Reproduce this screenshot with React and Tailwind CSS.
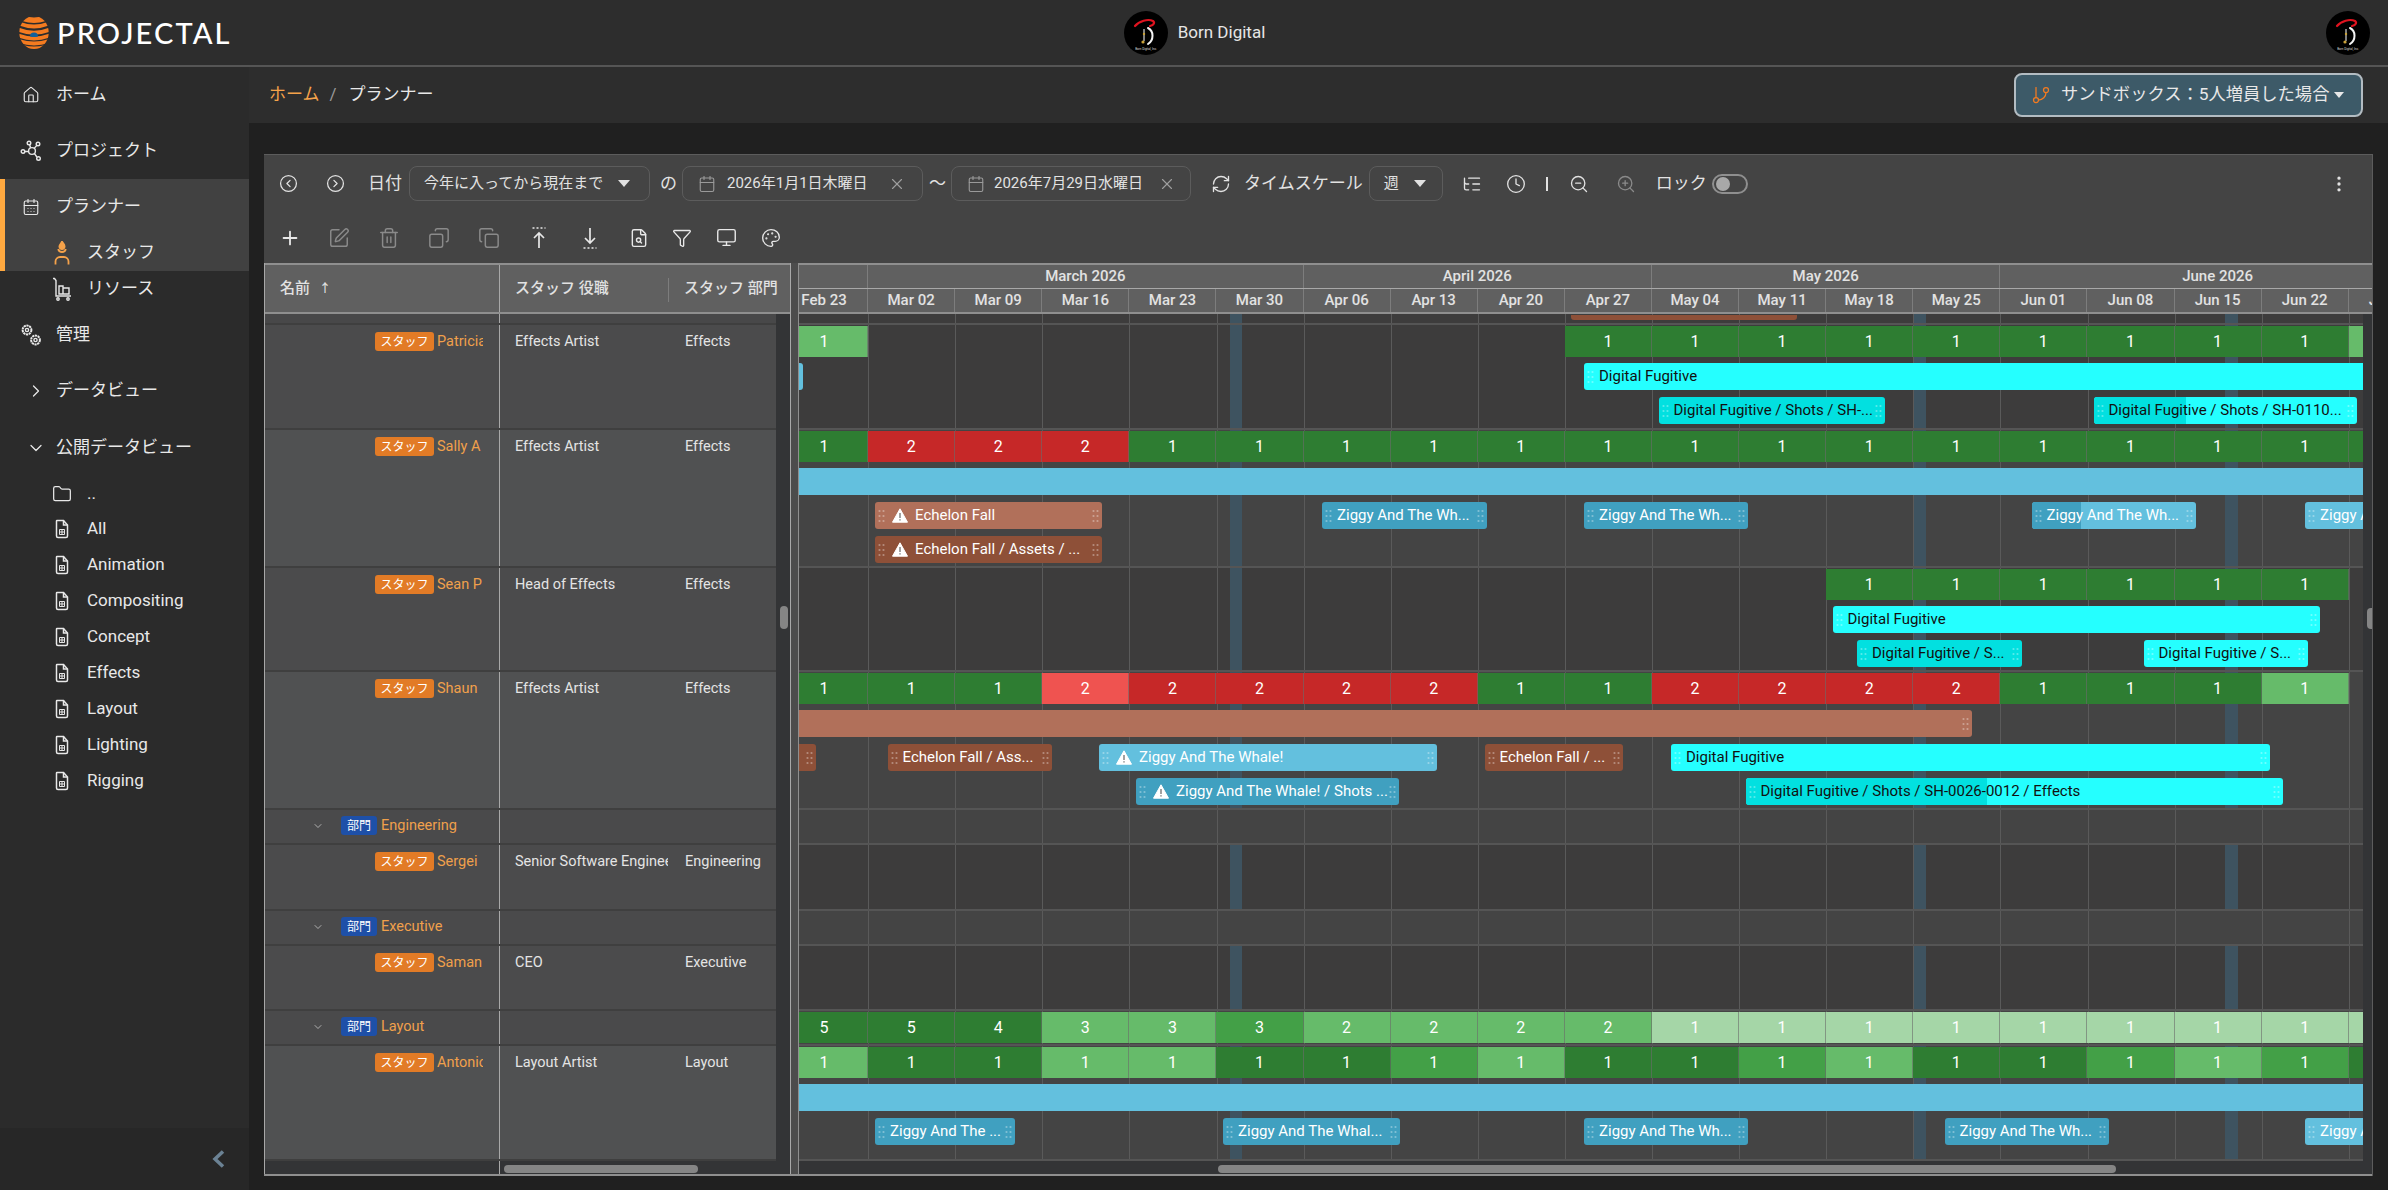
import React from 'react';
import {
  House, CalendarDays, Folder, ChevronRight, ChevronDown, CircleChevronLeft, CircleChevronRight,
  Calendar, X, RefreshCw, Plus, SquarePen, Trash2, Copy, FileSearch, Funnel, Monitor, Palette, ZoomIn, ZoomOut,
  Clock, GitBranch, EllipsisVertical, ListTree,
} from 'lucide-react';

const WEEK = 87.1;
const ORIGIN = 781;
const weeks = ['Feb 23', 'Mar 02', 'Mar 09', 'Mar 16', 'Mar 23', 'Mar 30', 'Apr 06', 'Apr 13', 'Apr 20', 'Apr 27', 'May 04', 'May 11', 'May 18', 'May 25', 'Jun 01', 'Jun 08', 'Jun 15', 'Jun 22', 'Jun 29'];
const months = [
  { label: '', span: 1 },
  { label: 'March 2026', span: 5 },
  { label: 'April 2026', span: 4 },
  { label: 'May 2026', span: 4 },
  { label: 'June 2026', span: 5 },
];
const stripes = [1229.6, 1913, 2225];

const tones = {
  cyan: 'bg-[#25ffff] text-[#111]',
  teal: 'bg-[#02e0e0] text-[#111]',
  sky: 'bg-[#63c0de] text-white',
  blue: 'bg-[#40a0c0] text-white',
  clay: 'bg-[#b1705a] text-white',
  rust: 'bg-[#8e5038] text-white',
};
const progressTones = { teal: 'bg-[#02e0e0]', blue: 'bg-[#40a0c0]' };

const loadTones = {
  d: 'bg-[#2e7d32]',
  m: 'bg-[#43a047]',
  l: 'bg-[#66bb6a]',
  p: 'bg-[#a5d6a7]',
  r: 'bg-[#c62828]',
  o: 'bg-[#ef5350]',
};

const cells = (str, vals) => str.split('').map((t, i) => (t === '.' ? null : { t, v: vals ? vals[i] : t === 'r' || t === 'o' ? 2 : 1 }));

const rows = [
  { h: 11, dark: true, stub: true, lanes: [] },
  {
    h: 105, dark: true, tag: 'スタッフ', name: 'Patricia', role: 'Effects Artist', dept: 'Effects',
    load: cells('l........dddddddddl'),
    lanes: [
      [
        { a: 781, b: 802.5, tone: 'sky' },
        { a: 1584, b: 2400, tone: 'cyan', label: 'Digital Fugitive', hl: true },
      ],
      [
        { a: 1658.5, b: 1884.5, tone: 'teal', label: 'Digital Fugitive / Shots / SH-...', hl: true, hr: true },
        { a: 2093.5, b: 2357, tone: 'cyan', label: 'Digital Fugitive / Shots / SH-0110...', hl: true, hr: true, progress: 92.5, under: 'teal' },
      ],
    ],
  },
  {
    h: 138, tag: 'スタッフ', name: 'Sally A', role: 'Effects Artist', dept: 'Effects',
    load: cells('drrrddddddddddddddd'),
    lanes: [
      [{ a: 781, b: 2400, tone: 'sky' }],
      [
        { a: 875, b: 1101.5, tone: 'clay', label: 'Echelon Fall', warn: true, hl: true, hr: true },
        { a: 1322, b: 1486.5, tone: 'blue', label: 'Ziggy And The Wh...', hl: true, hr: true },
        { a: 1584, b: 1748, tone: 'blue', label: 'Ziggy And The Wh...', hl: true, hr: true },
        { a: 2031.5, b: 2195.5, tone: 'sky', label: 'Ziggy And The Wh...', hl: true, hr: true, progress: 49.5, under: 'blue' },
        { a: 2305, b: 2420, tone: 'sky', label: 'Ziggy And The Whale!', hl: true },
      ],
      [{ a: 875, b: 1101.5, tone: 'rust', label: 'Echelon Fall / Assets / ...', warn: true, hl: true, hr: true }],
    ],
  },
  {
    h: 104, dark: true, tag: 'スタッフ', name: 'Sean P', role: 'Head of Effects', dept: 'Effects',
    load: cells('............dddddd.'),
    lanes: [
      [{ a: 1832.5, b: 2320, tone: 'cyan', label: 'Digital Fugitive', hl: true, hr: true }],
      [
        { a: 1857, b: 2022, tone: 'teal', label: 'Digital Fugitive / S...', hl: true, hr: true },
        { a: 2143.5, b: 2308, tone: 'cyan', label: 'Digital Fugitive / S...', hl: true, hr: true },
      ],
    ],
  },
  {
    h: 138, tag: 'スタッフ', name: 'Shaun', role: 'Effects Artist', dept: 'Effects',
    load: cells('dddorrrrddrrrrdddl.'),
    lanes: [
      [{ a: 781, b: 1972, tone: 'clay', hr: true }],
      [
        { a: 781, b: 815.5, tone: 'rust', hr: true },
        { a: 887.5, b: 1051.5, tone: 'rust', label: 'Echelon Fall / Ass...', hl: true, hr: true },
        { a: 1099, b: 1437, tone: 'sky', label: 'Ziggy And The Whale!', warn: true, hl: true, hr: true },
        { a: 1484.5, b: 1623, tone: 'rust', label: 'Echelon Fall / ...', hl: true, hr: true },
        { a: 1671, b: 2270, tone: 'cyan', label: 'Digital Fugitive', hl: true, hr: true },
      ],
      [
        { a: 1136, b: 1399, tone: 'blue', label: 'Ziggy And The Whale! / Shots ...', warn: true, hl: true, hr: true },
        { a: 1745.5, b: 2282.5, tone: 'cyan', label: 'Digital Fugitive / Shots / SH-0026-0012 / Effects', hl: true, hr: true, progress: 241.5, under: 'teal' },
      ],
    ],
  },
  { h: 35, group: true, tag: '部門', name: 'Engineering', lanes: [] },
  { h: 66, dark: true, tag: 'スタッフ', name: 'Sergei', role: 'Senior Software Engineer', dept: 'Engineering', lanes: [] },
  { h: 35, group: true, tag: '部門', name: 'Executive', lanes: [] },
  { h: 65, dark: true, tag: 'スタッフ', name: 'Saman', role: 'CEO', dept: 'Executive', lanes: [] },
  {
    h: 35, group: true, tag: '部門', name: 'Layout', lanes: [],
    load: cells('dddllmllllppppppppp', [5, 5, 4, 3, 3, 3, 2, 2, 2, 2, 1, 1, 1, 1, 1, 1, 1, 1, 1]),
  },
  {
    h: 115, tag: 'スタッフ', name: 'Antonio', role: 'Layout Artist', dept: 'Layout',
    load: cells('lddllddmlddmlddmlmd'),
    lanes: [
      [{ a: 781, b: 2400, tone: 'sky' }],
      [
        { a: 875, b: 1014.5, tone: 'blue', label: 'Ziggy And The ...', hl: true, hr: true },
        { a: 1223, b: 1399.5, tone: 'blue', label: 'Ziggy And The Whal...', hl: true, hr: true },
        { a: 1584, b: 1748, tone: 'blue', label: 'Ziggy And The Wh...', hl: true, hr: true },
        { a: 1944.5, b: 2109, tone: 'blue', label: 'Ziggy And The Wh...', hl: true, hr: true },
        { a: 2305, b: 2420, tone: 'sky', label: 'Ziggy And The Whale!', hl: true },
      ],
    ],
  },
];

const FileGrid = ({ className }) => (
  <svg viewBox="0 0 16 20" fill="none" stroke="currentColor" strokeWidth="1.5" className={className}>
    <path d="M3 1.500h6.500L13.500 6v11a1.500 1.500 0 0 1-1.500 1.500H4A1.500 1.500 0 0 1 2.500 17V2a.5.5 0 0 1 .5-.5z" />
    <path d="M9.500 1.500V6h4" />
    <path d="M5.500 10.500h5v5h-5zM8 10.500v5M5.500 13h5" strokeWidth="1" />
  </svg>
);

const ProjectIcon = ({ className }) => (
  <svg viewBox="0 0 22 22" fill="none" stroke="currentColor" strokeWidth="1.400" className={className}>
    <circle cx="12" cy="11" r="3.400" />
    <circle cx="3" cy="11.500" r="1.800" />
    <circle cx="9" cy="3" r="1.800" />
    <circle cx="18" cy="4" r="1.800" />
    <circle cx="18.500" cy="18.500" r="1.800" />
    <path d="M4.800 11.500h3.800M9.600 4.800l1 3M16.800 5.400l-2.600 3M16.900 17l-2.600-3.600" />
  </svg>
);

const GearsIcon = ({ className }) => (
  <svg viewBox="0 0 22 24" fill="none" stroke="currentColor" strokeWidth="1.400" className={className}>
    <circle cx="7" cy="7" r="4.400" strokeDasharray="2.200 0.600" strokeWidth="2" />
    <circle cx="7" cy="7" r="1.600" />
    <circle cx="15.500" cy="17" r="4.400" strokeDasharray="2.200 0.600" strokeWidth="2" />
    <circle cx="15.500" cy="17" r="1.600" />
  </svg>
);

const StaffIcon = ({ className }) => (
  <svg viewBox="0 0 18 24" fill="none" stroke="currentColor" strokeWidth="1.800" className={className}>
    <path d="M9 .5c.4 1.600 2.600 2.400 2.600 5A2.600 2.600 0 0 1 9 8.200a2.600 2.600 0 0 1-2.600-2.700C6.400 3.600 8.400 2.400 9 .5z" fill="currentColor" />
    <path d="M5.200 8a3.900 3.900 0 0 0 7.600 0" />
    <path d="M2.500 23.500v-3a4.500 4.500 0 0 1 4.500-4.500h4a4.500 4.500 0 0 1 4.500 4.500v3" />
  </svg>
);

const ResourceIcon = ({ className }) => (
  <svg viewBox="0 0 20 24" fill="none" stroke="currentColor" strokeWidth="1.400" className={className}>
    <path d="M1 1.500h1.500l1.500 2V19h15" />
    <path d="M7 9h4v8H7zM11 11h6v6h-6z" />
    <circle cx="6" cy="22" r="1.200" />
    <circle cx="16" cy="22" r="1.200" />
  </svg>
);

const UploadDots = ({ className, flip }) => (
  <svg viewBox="0 0 20 24" fill="none" stroke="currentColor" strokeWidth="1.700" className={className}>
    {flip ? (
      <>
        <path d="M10 2v15M5 12l5 5 5-5" />
        <path d="M3.500 22h13" strokeDasharray="2 2" />
      </>
    ) : (
      <>
        <path d="M3.500 2h13" strokeDasharray="2 2" />
        <path d="M10 22V7M5 12l5-5 5 5" />
      </>
    )}
  </svg>
);

const Logo = () => (
  <svg viewBox="0 0 30 33" className="w-[30px] h-[33px] shrink-0">
    <defs>
      <clipPath id="ball">
        <ellipse cx="15" cy="16.500" rx="14.700" ry="16.500" />
      </clipPath>
    </defs>
    <g clipPath="url(#ball)" fill="none" stroke="#f47b20" strokeWidth="3.800">
      <path d="M4 2.500Q15 6 26 2.500" strokeWidth="5.500" />
      <path d="M0 7.500Q15 13.500 30 7.500" />
      <path d="M-1 13.500Q15 20 31 13.500" />
      <path d="M-1 19.500Q15 25.500 31 19.500" />
      <path d="M0 25Q15 30 30 25" />
      <path d="M4 31Q15 33.500 26 31" strokeWidth="3.600" />
    </g>
    <path d="M11 20.500a4 4 0 0 1 8 0q-4 1-8 0z" fill="#12609c" />
  </svg>
);

const BornLogo = () => (
  <svg viewBox="0 0 44 44" className="w-[44px] h-[44px] shrink-0">
    <circle cx="22" cy="22" r="22" fill="#000" />
    <path d="M11 15C15 10 24 7.500 29 10c2 1.500 1 4-3 5" fill="none" stroke="#e0131f" strokeWidth="2.200" strokeLinecap="round" />
    <path d="M24 17c6 3 6 12 0 16" fill="none" stroke="#f4f4f4" strokeWidth="2" strokeLinecap="round" />
    <path d="M20 18v12" stroke="#d8d8d8" strokeWidth="1.200" />
    <circle cx="19" cy="31" r="1.600" fill="#c9a23a" />
    <circle cx="20" cy="23" r="1.200" fill="#c9a23a" />
    <text x="22" y="38.500" textAnchor="middle" fontSize="3" fill="#ddd" fontFamily="Roboto, sans-serif">Born Digital, Inc.</text>
  </svg>
);

const Warn = () => (
  <svg viewBox="0 0 16 15" className="w-[16px] h-[15px] shrink-0">
    <path d="M8 .8 15.500 14.200H.5z" fill="#fff" stroke="#fff" strokeLinejoin="round" />
    <path d="M8 5v5M8 11.300v1.300" stroke="#8a8a8a" strokeWidth="1.600" />
  </svg>
);

const Handle = ({ side }) => (
  <svg viewBox="0 0 7 14" className={`absolute top-[7px] w-[7px] h-[14px] text-white/35 ${side === 'l' ? 'left-[3px]' : 'right-[3px]'}`}>
    {[1.500, 5.500].map((x) => [2, 7, 12].map((y) => <circle key={`${x}${y}`} cx={x} cy={y} r="1.100" fill="currentColor" />))}
  </svg>
);

const Bar = ({ bar }) => (
  <div
    className={`absolute top-0 h-[27px] rounded-[3px] overflow-hidden ${tones[bar.tone]}`}
    style={{ left: bar.a - ORIGIN, width: bar.b - bar.a }}
  >
    {bar.progress && <div className={`absolute inset-y-0 left-0 ${progressTones[bar.under]}`} style={{ width: bar.progress }} />}
    {bar.hl && <Handle side="l" />}
    {bar.hr && <Handle side="r" />}
    {bar.label && (
      <div className={`relative h-full flex items-center whitespace-nowrap text-[15px] ${bar.warn ? 'pl-[17px] gap-[7px]' : 'pl-[15px]'}`}>
        {bar.warn && <Warn />}
        <span>{bar.label}</span>
      </div>
    )}
  </div>
);

const GanttRow = ({ row }) => (
  <div className={`relative border-b-2 border-[#555] ${row.dark ? 'bg-[#3d3c3c]' : 'bg-[#444444]'}`} style={{ height: row.h }}>
    {!row.group && stripes.map((x) => (
      <div key={x} className="absolute inset-y-0 w-[12.5px] bg-[#3e5360]" style={{ left: x - ORIGIN }} />
    ))}
    {weeks.map((w, i) => (
      <div key={w} className="absolute inset-y-0 w-px bg-[#5a5a5a]" style={{ left: (i + 1) * WEEK }} />
    ))}
    {row.stub && <div className="absolute top-[1px] h-[5px] rounded-b-[3px] bg-[#8e5038]" style={{ left: 790, width: 226 }} />}
    {row.load && (
      <div className="relative flex pt-px">
        {row.load.map((c, i) => (
          <div key={i} className={`w-[87.1px] h-[31px] shrink-0 flex items-center justify-center text-[16px] text-white ${c ? `${loadTones[c.t]} border-r border-[#6a6a6a]/60` : ''}`}>
            {c ? c.v : ''}
          </div>
        ))}
      </div>
    )}
    {row.lanes.map((lane, i) => (
      <div key={i} className={`relative h-[27px] ${i === 0 ? 'mt-[6px]' : 'mt-[7px]'}`}>
        {lane.map((bar) => <Bar key={`${bar.a}${bar.tone}`} bar={bar} />)}
      </div>
    ))}
  </div>
);

const LeftRow = ({ row }) => {
  if (row.stub) {
    return (
      <div className="flex h-[11px] bg-[#484849] border-b-2 border-[#3f3f3f]">
        <div className="w-[235px] border-r border-[#a8a8a8]" />
      </div>
    );
  }
  const bg = row.group ? 'bg-[#4a4a4b]' : row.dark ? 'bg-[#4b4b4c]' : 'bg-[#505152]';
  return (
    <div className={`flex border-b-2 border-[#3f3f3f] ${bg}`} style={{ height: row.h }}>
      {row.group ? (
        <div className="w-[235px] border-r border-[#a8a8a8] flex items-start pt-[6px] pl-[47px]">
          <ChevronDown className="w-[12px] h-[12px] mt-[4px] text-[#cfcfcf]" strokeWidth={1.5} />
          <span className="ml-[17px] w-[36px] h-[19px] rounded-[3px] bg-[#1e50a8] text-white text-[12px] flex items-center justify-center">{row.tag}</span>
          <span className="ml-[4px] text-[14.5px] leading-[19px] text-[#f0a04b]">{row.name}</span>
        </div>
      ) : (
        <div className="w-[235px] border-r border-[#a8a8a8] flex items-start pt-[7px] pl-[110px]">
          <span className="w-[59px] h-[19px] rounded-[3px] bg-[#e27b26] text-white text-[12px] flex items-center justify-center shrink-0">{row.tag}</span>
          <span className="ml-[3px] w-[46px] overflow-hidden whitespace-nowrap text-[14.5px] leading-[19px] text-[#f0a04b]">{row.name}</span>
        </div>
      )}
      <div className="w-[168px] pl-[15px] pt-[7px] overflow-hidden whitespace-nowrap text-[14.5px] leading-[19px] text-[#e4e4e4]">{row.role}</div>
      <div className="flex-1 pl-[17px] pt-[7px] overflow-hidden whitespace-nowrap text-[14.5px] leading-[19px] text-[#e4e4e4]">{row.dept}</div>
    </div>
  );
};

const NavItem = ({ icon, label, className = 'h-[36px]', textClass = 'pl-[87px]', children }) => (
  <div className={`relative flex items-center text-[17px] text-[#e8e8e8] ${textClass} ${className}`}>
    {icon}
    {label}
    {children}
  </div>
);

const viewNames = ['All', 'Animation', 'Compositing', 'Concept', 'Effects', 'Layout', 'Lighting', 'Rigging'];

const Sidebar = () => (
  <aside className="w-[249px] shrink-0 flex flex-col bg-[#2b2b2b]">
    <NavItem label="ホーム" className="h-[56px]" textClass="pl-[56px]" icon={<House className="absolute left-[22px] w-[18px] h-[18px]" strokeWidth={1.5} />} />
    <NavItem label="プロジェクト" className="h-[56px]" textClass="pl-[56px]" icon={<ProjectIcon className="absolute left-[20px] w-[22px] h-[22px]" />} />
    <div className="bg-[#414141] border-l-[5px] border-[#ffa940]">
      <NavItem label="プランナー" className="h-[55px]" textClass="pl-[51px]" icon={<CalendarDays className="absolute left-[17px] w-[18px] h-[20px]" strokeWidth={1.5} />} />
      <NavItem label="スタッフ" className="h-[37px]" textClass="pl-[82px]" icon={<StaffIcon className="absolute left-[48px] w-[18px] h-[24px] text-[#f5a24a]" />} />
    </div>
    <NavItem label="リソース" className="h-[35px]" icon={<ResourceIcon className="absolute left-[52px] w-[20px] h-[24px]" />} />
    <NavItem label="管理" className="h-[57px]" textClass="pl-[56px]" icon={<GearsIcon className="absolute left-[20px] w-[22px] h-[24px]" />} />
    <NavItem label="データビュー" className="h-[56px]" textClass="pl-[56px]" icon={<ChevronRight className="absolute left-[26px] w-[20px] h-[20px]" strokeWidth={1.5} />} />
    <NavItem label="公開データビュー" className="h-[57px]" textClass="pl-[56px]" icon={<ChevronDown className="absolute left-[26px] w-[20px] h-[20px]" strokeWidth={1.5} />} />
    <NavItem label=".." className="h-[35px]" icon={<Folder className="absolute left-[52px] w-[20px] h-[20px]" strokeWidth={1.5} />} />
    {viewNames.map((n) => (
      <NavItem key={n} label={n} icon={<FileGrid className="absolute left-[54px] w-[16px] h-[20px]" />} />
    ))}
    <div className="mt-auto h-[62px] bg-[#272727] flex items-center justify-end pr-[24px]">
      <svg viewBox="0 0 13 18" fill="none" stroke="#6b8294" strokeWidth="3.500" className="w-[13px] h-[18px]">
        <path d="M11 1.500 3 9l8 7.500" />
      </svg>
    </div>
  </aside>
);

const TopToolbar = () => (
  <div className="h-[57px] flex items-center pl-[15px] text-[#e2e2e2]">
    <CircleChevronLeft className="w-[19px] h-[19px]" strokeWidth={1.6} />
    <CircleChevronRight className="w-[19px] h-[19px] ml-[28px]" strokeWidth={1.6} />
    <span className="ml-[23px] text-[17px]">日付</span>
    <div className="ml-[7px] w-[241px] h-[35px] rounded-[8px] border border-[#5c5c5c] flex items-center pl-[14px] text-[15px]">
      今年に入ってから現在まで
      <span className="ml-[15px] w-0 h-0 border-x-[6px] border-x-transparent border-t-[7px] border-t-[#e2e2e2]" />
    </div>
    <span className="ml-[10px] text-[17px]">の</span>
    <div className="ml-[5px] w-[241px] h-[35px] rounded-[8px] border border-[#5c5c5c] flex items-center pl-[15px] text-[15px]">
      <Calendar className="w-[18px] h-[20px] text-[#9a9a9a] mr-[11px]" strokeWidth={1.5} />
      <span>2026年1月1日木曜日</span>
      <X className="w-[18px] h-[18px] ml-[20px] text-[#a0a0a0]" strokeWidth={1.5} />
    </div>
    <span className="ml-[6px] w-[22px] text-[17px]">〜</span>
    <div className="w-[240px] h-[35px] rounded-[8px] border border-[#5c5c5c] flex items-center pl-[15px] text-[15px]">
      <Calendar className="w-[18px] h-[20px] text-[#9a9a9a] mr-[9px]" strokeWidth={1.5} />
      <span>2026年7月29日水曜日</span>
      <X className="w-[18px] h-[18px] ml-[15px] text-[#a0a0a0]" strokeWidth={1.5} />
    </div>
    <RefreshCw className="w-[20px] h-[20px] ml-[20px]" strokeWidth={1.6} />
    <span className="ml-[13px] text-[17px]">タイムスケール</span>
    <div className="ml-[6px] w-[74px] h-[35px] rounded-[8px] border border-[#5c5c5c] flex items-center pl-[14px] text-[15px]">
      週
      <span className="ml-[15px] w-0 h-0 border-x-[6px] border-x-transparent border-t-[7px] border-t-[#e2e2e2]" />
    </div>
    <ListTree className="w-[20px] h-[20px] ml-[19px]" strokeWidth={1.6} />
    <Clock className="w-[20px] h-[20px] ml-[24px]" strokeWidth={1.6} />
    <span className="ml-[20px] w-[2px] h-[14px] bg-[#e2e2e2]" />
    <ZoomOut className="w-[20px] h-[20px] ml-[21px]" strokeWidth={1.6} />
    <ZoomIn className="w-[20px] h-[20px] ml-[27px] text-[#8a8a8a]" strokeWidth={1.6} />
    <span className="ml-[20px] text-[17px]">ロック</span>
    <div className="ml-[5px] w-[36px] h-[20px] rounded-full border-2 border-[#8f8f8f] flex items-center pl-[2px]">
      <span className="w-[14px] h-[14px] rounded-full bg-[#a8a8a8]" />
    </div>
    <EllipsisVertical className="w-[20px] h-[20px] ml-[581px]" strokeWidth={2} />
  </div>
);

const ActionToolbar = () => (
  <div className="h-[51px] flex items-center pl-[15px] text-[#e8e8e8]">
    <Plus className="w-[22px] h-[22px]" strokeWidth={2} />
    <SquarePen className="w-[22px] h-[22px] ml-[27px] text-[#8a8a8a]" strokeWidth={1.6} />
    <Trash2 className="w-[22px] h-[22px] ml-[28px] text-[#8a8a8a]" strokeWidth={1.6} />
    <Copy className="w-[22px] h-[22px] ml-[28px] text-[#8a8a8a] rotate-90" strokeWidth={1.6} />
    <Copy className="w-[22px] h-[22px] ml-[28px] text-[#8a8a8a]" strokeWidth={1.6} />
    <UploadDots className="w-[20px] h-[24px] ml-[29px]" />
    <UploadDots flip className="w-[20px] h-[24px] ml-[31px]" />
    <FileSearch className="w-[20px] h-[22px] ml-[29px]" strokeWidth={1.7} />
    <Funnel className="w-[20px] h-[20px] ml-[23px]" strokeWidth={1.6} />
    <Monitor className="w-[21px] h-[21px] ml-[24px]" strokeWidth={1.6} />
    <Palette className="w-[20px] h-[20px] ml-[24px]" strokeWidth={1.6} />
  </div>
);

const LeftTable = () => (
  <div className="w-[527px] shrink-0 flex flex-col border-l border-[#a8a8a8] border-r border-r-[#a8a8a8]">
    <div className="h-[51px] flex bg-[#606060] border-y-2 border-[#8f8f8f] text-[15px] font-medium text-[#e2e2e2]">
      <div className="w-[235px] border-r border-[#a8a8a8] pl-[15px] flex items-center">
        名前<span className="ml-[9px] text-[12px]">↑</span>
      </div>
      <div className="w-[168px] pl-[15px] flex items-center">スタッフ 役職</div>
      <div className="flex-1 flex items-center pl-[16px] relative">
        <span className="absolute left-0 top-[13px] h-[24px] w-px bg-[#7d7d7d]" />
        スタッフ 部門
      </div>
    </div>
    <div className="flex-1 flex min-h-0">
      <div className="w-[511px] flex flex-col">
        {rows.map((r, i) => <LeftRow key={i} row={r} />)}
        <div className="flex-1 flex bg-[#333436]">
          <div className="w-[235px] border-r border-[#a8a8a8]" />
          <div className="ml-[4px] mt-[4px] w-[194px] h-[8px] rounded-full bg-[#858585]" />
        </div>
      </div>
      <div className="flex-1 relative bg-[#333436]">
        <div className="absolute left-[4px] top-[292px] w-[8px] h-[23px] rounded-full bg-[#858585]" />
      </div>
    </div>
  </div>
);

const GanttHeader = () => (
  <div className="h-[51px] overflow-hidden bg-[#606060] border-y-2 border-[#8f8f8f] text-[#e2e2e2] font-medium">
    <div className="w-[1700px] ml-[-18px]">
      <div className="flex h-[24px] border-b border-[#a8a8a8]">
        {months.map((m) => (
          <div key={m.label} className="shrink-0 flex items-center justify-center text-[15px] border-r border-[#7d7d7d]" style={{ width: m.span * WEEK }}>
            {m.label}
          </div>
        ))}
      </div>
      <div className="flex h-[23px]">
        {weeks.map((w) => (
          <div key={w} className="w-[87.1px] shrink-0 flex items-center justify-center text-[15px] border-r border-[#7d7d7d]">{w}</div>
        ))}
      </div>
    </div>
  </div>
);

const Gantt = () => (
  <div className="flex-1 min-w-0 flex flex-col">
    <GanttHeader />
    <div className="flex-1 flex min-h-0">
      <div className="w-[1564px] flex flex-col overflow-hidden">
        <div className="w-[1700px] ml-[-18px]">
          {rows.map((r, i) => <GanttRow key={i} row={r} />)}
        </div>
        <div className="flex-1 bg-[#333436]">
          <div className="ml-[419px] mt-[4px] w-[898px] h-[8px] rounded-full bg-[#858585]" />
        </div>
      </div>
      <div className="flex-1 relative bg-[#333436] overflow-hidden">
        <div className="absolute left-[4px] top-[294px] w-[8px] h-[21px] rounded-full bg-[#858585]" />
      </div>
    </div>
  </div>
);

export default function App() {
  return (
    <div className="w-[2388px] h-[1190px] overflow-hidden flex flex-col bg-[#2d2d2d] text-white font-['Roboto','Noto_Sans_CJK_JP',sans-serif]">
      <header className="h-[67px] shrink-0 grid grid-cols-3 items-center border-b-2 border-[#555] pl-[19px] pr-[18px]">
        <div className="flex items-center gap-[8px]">
          <Logo />
          <span className="font-['Lato',sans-serif] font-medium text-[29px] tracking-[2.1px] text-white">PROJECTAL</span>
        </div>
        <div className="flex items-center justify-center gap-[10px]">
          <BornLogo />
          <span className="text-[17px] text-[#e6e6e6]">Born Digital</span>
        </div>
        <div className="flex justify-end">
          <BornLogo />
        </div>
      </header>
      <div className="flex-1 flex min-h-0">
        <Sidebar />
        <main className="flex-1 min-w-0 flex flex-col">
          <div className="h-[56px] shrink-0 flex items-center justify-between pl-[20px] pr-[25px] text-[17px]">
            <div className="flex items-center">
              <span className="text-[#f5a24a]">ホーム</span>
              <span className="ml-[10px] text-[#9a9a9a]">/</span>
              <span className="ml-[12px] text-[#e8e8e8]">プランナー</span>
            </div>
            <div className="w-[349px] h-[44px] rounded-[8px] border-2 border-[#b3bcc2] bg-[#3d5a68] flex items-center pl-[15px] text-[#e8e8e8]">
              <GitBranch className="w-[20px] h-[24px] text-[#f47b20]" strokeWidth={1.5} />
              <span className="ml-[10px] text-[17.3px]">サンドボックス：5人増員した場合</span>
              <span className="ml-[5px] w-0 h-0 border-x-[5px] border-x-transparent border-t-[6px] border-t-[#e8e8e8]" />
            </div>
          </div>
          <div className="flex-1 min-h-0 bg-[#202020] pl-[15px] pr-[15px] pt-[31px] pb-[14px]">
            <section className="h-full flex flex-col bg-[#444444] border-t border-r border-[#5c5c5c]">
              <TopToolbar />
              <ActionToolbar />
              <div className="flex-1 flex min-h-0 border-b-2 border-[#8f8f8f]">
                <LeftTable />
                <div className="w-[8px] shrink-0 bg-[#4c4c4c] border-r border-[#8f8f8f]" />
                <Gantt />
              </div>
            </section>
          </div>
        </main>
      </div>
    </div>
  );
}
